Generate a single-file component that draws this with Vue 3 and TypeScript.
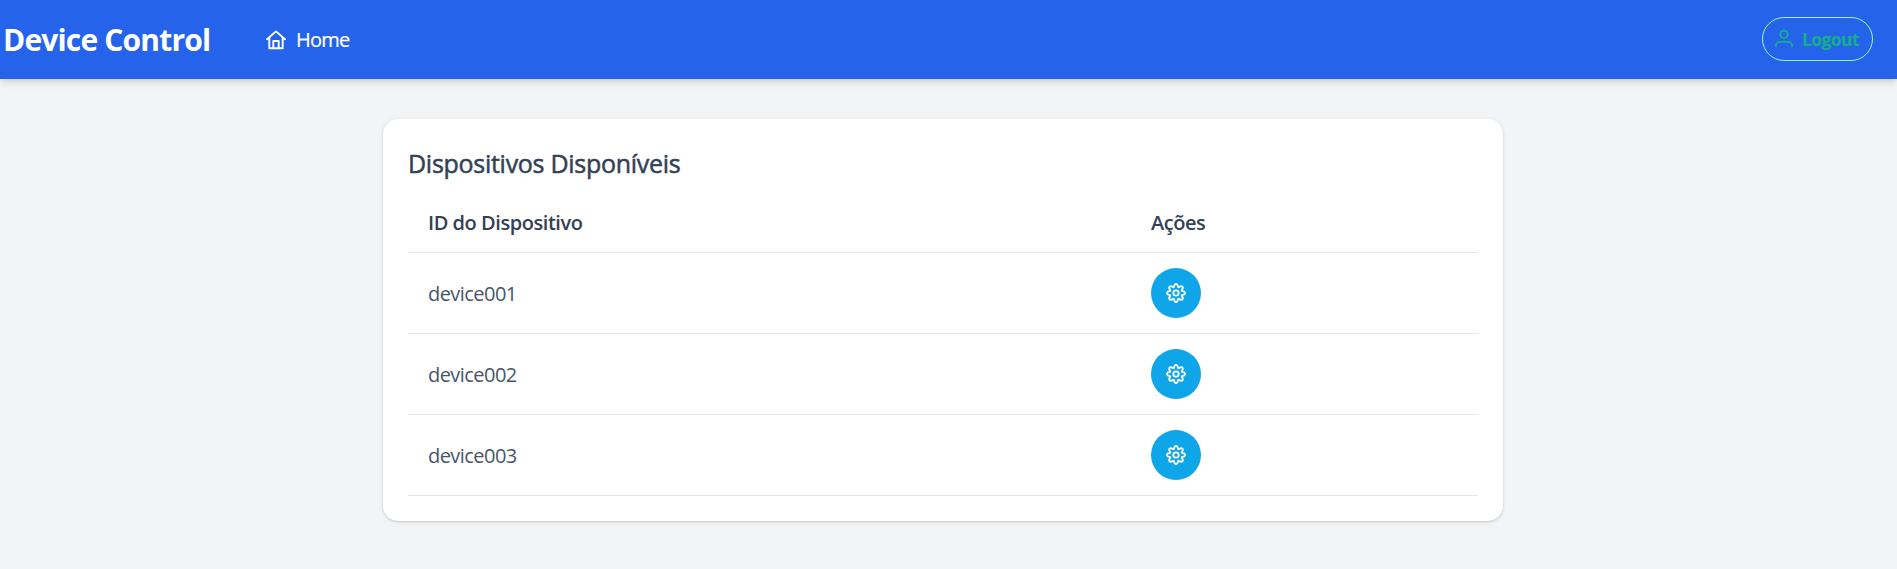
<script setup lang="ts">
interface Device {
  id: string
}

const devices: Device[] = [{ id: 'device001' }, { id: 'device002' }, { id: 'device003' }]

// Outline of an eight-toothed gear centred on the origin
const gearPath: string = (() => {
  const points: string[] = []
  for (let i = 0; i < 96; i++) {
    const a = (i / 96) * Math.PI * 2
    const r = 7.6 + 1.45 * Math.cos(8 * a)
    const t = a + 0.035 * Math.sin(8 * a)
    points.push(`${(r * Math.cos(t)).toFixed(2)} ${(r * Math.sin(t)).toFixed(2)}`)
  }
  return `M${points.join('L')}Z`
})()
</script>

<template>
  <div class="page">
    <header class="navbar">
      <span class="brand">Device Control</span>
      <a class="nav-link">
        <svg class="home-icon" width="20" height="20" viewBox="0 0 20 20">
          <path d="M1 9.2 10 1.4l9 7.8M3.3 7.6v10.6h13.4V7.600M7.300 18v-7h5.400v7" />
        </svg>
        <span class="nav-text">Home</span>
      </a>
      <button class="logout" type="button">
        <svg class="user-icon" width="20" height="20" viewBox="0 0 20 20">
          <circle cx="10" cy="5.3" r="3.8" />
          <path d="M1.900 17.400v-.8c0-2.400 2.200-4 4.800-4h6.600c2.600 0 4.800 1.600 4.800 4v.8" />
        </svg>
        <span class="logout-text">Logout</span>
      </button>
    </header>

    <main class="card">
      <h2 class="title">Dispositivos Disponíveis</h2>
      <table class="table">
        <thead>
          <tr>
            <th class="id-col">ID do Dispositivo</th>
            <th>Ações</th>
          </tr>
        </thead>
        <tbody>
          <tr v-for="device in devices" :key="device.id">
            <td class="id-cell">{{ device.id }}</td>
            <td>
              <button class="cog" type="button" :aria-label="device.id">
                <svg width="20" height="20" viewBox="-10 -10 20 20">
                  <path :d="gearPath" />
                  <circle r="2.700" />
                </svg>
              </button>
            </td>
          </tr>
        </tbody>
      </table>
    </main>
  </div>
</template>

<style>
body {
  margin: 0;
  background: #f3f4f6;
}
</style>

<style scoped>
.page {
  min-height: 569px;
  overflow: hidden;
  background: #f3f4f6;
  font-family: 'Segoe UI', 'Open Sans', 'Noto Sans', sans-serif;
  color: #334155;
}
svg {
  display: block;
  flex: none;
  fill: none;
  stroke: currentColor;
  stroke-width: 1.8;
  stroke-linecap: round;
  stroke-linejoin: round;
}
.navbar {
  display: flex;
  align-items: center;
  box-sizing: border-box;
  height: 79px;
  padding: 0 24px 0 3px;
  background: #2563eb;
  color: #fff;
  box-shadow: 0 5px 8px -1px rgba(0, 0, 0, 0.1), 0 3px 5px -2px rgba(0, 0, 0, 0.1);
}
.brand {
  width: 263px;
  font-size: 30px;
  line-height: 40px;
  font-weight: 700;
  letter-spacing: -0.83px;
  white-space: nowrap;
}
.nav-link {
  display: flex;
  align-items: center;
  gap: 10px;
  font-size: 20px;
  line-height: 30px;
}
.home-icon {
  stroke-width: 1.9;
}
.nav-text {
  letter-spacing: -0.8px;
  -webkit-text-stroke: 0.2px currentColor;
}
.logout {
  display: flex;
  align-items: center;
  box-sizing: border-box;
  width: 111px;
  height: 44px;
  margin: 0 0 1px auto;
  padding: 0 0 0 11px;
  border: 1px solid #a7f3d0;
  border-radius: 22px;
  background: transparent;
  color: #14b08b;
  font-family: inherit;
  font-size: 17.500px;
  font-weight: 700;
  gap: 8px;
}
.logout-text {
  letter-spacing: -0.6px;
}
.card {
  box-sizing: border-box;
  width: 1120px;
  height: 402px;
  margin: 40px 0 0 383px;
  padding: 25px;
  border-radius: 15px;
  background: #fff;
  box-shadow: 0 1px 4px rgba(0, 0, 0, 0.1), 0 1px 2px rgba(0, 0, 0, 0.1);
}
.title {
  margin: 0 0 15px;
  height: 38px;
  font-size: 25px;
  line-height: 38px;
  font-weight: 400;
  letter-spacing: -0.28px;
  -webkit-text-stroke: 0.5px currentColor;
}
.table {
  width: 1070px;
  border-collapse: separate;
  border-spacing: 0;
  table-layout: fixed;
  font-size: 20px;
  line-height: 30px;
}
th,
td {
  box-sizing: border-box;
  padding: 0 20px;
  border-bottom: 1px solid #e2e8f0;
  text-align: left;
  vertical-align: middle;
}
th {
  height: 56px;
  padding-bottom: 4px;
  font-weight: 600;
  letter-spacing: -0.45px;
}
.id-col {
  width: 723px;
}
td {
  height: 81px;
  color: #475569;
  letter-spacing: -0.55px;
}
.id-cell {
  padding-top: 2px;
}
.cog {
  display: flex;
  align-items: center;
  justify-content: center;
  width: 50px;
  height: 50px;
  padding: 0;
  border: 0;
  border-radius: 50%;
  background: #0ea5e9;
  color: #fff;
}
</style>
